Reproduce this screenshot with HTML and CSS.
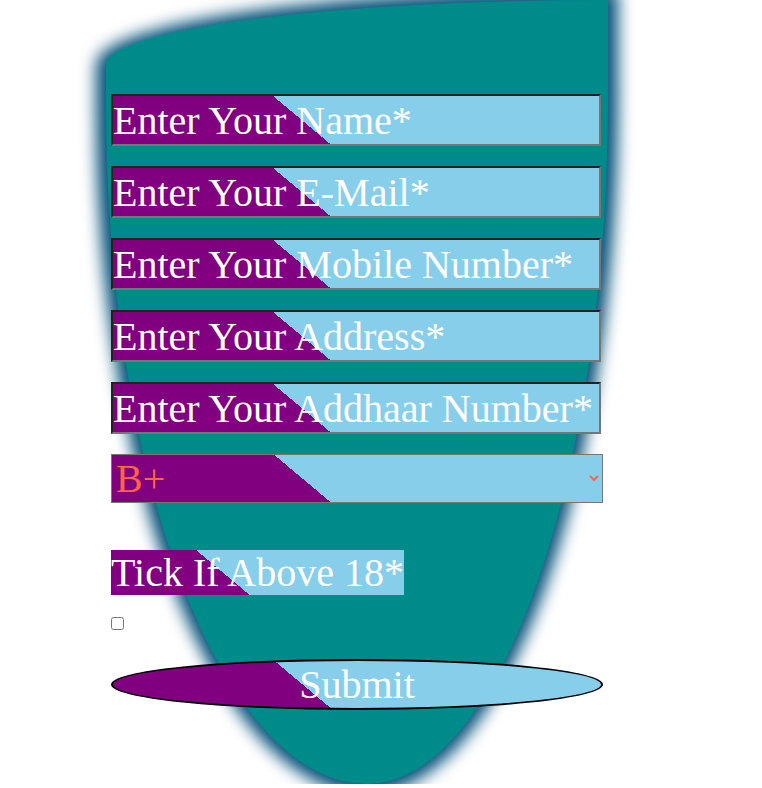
FILE: index.html
```html
<!DOCTYPE html>
<html lang="en">
<head>
<meta charset="utf-8">
<title>Registration Form</title>
<link rel="stylesheet" href="styles.css">
</head>
<body>
<form class="blob">
  <input class="field" type="text" placeholder="Enter Your Name*">
  <input class="field" type="email" placeholder="Enter Your E-Mail*">
  <input class="field" type="text" placeholder="Enter Your Mobile Number*">
  <input class="field" type="text" placeholder="Enter Your Address*">
  <input class="field" type="text" placeholder="Enter Your Addhaar Number*">
  <select class="group">
    <option>B+</option>
    <option>A+</option>
    <option>O+</option>
    <option>AB+</option>
  </select>
  <div class="tick-row"><label class="tick" for="adult">Tick If Above 18*</label></div>
  <input class="check" id="adult" type="checkbox">
  <button class="submit" type="submit">Submit</button>
</form>
</body>
</html>
```

FILE: styles.css
```css
html, body {
  margin: 0;
  padding: 0;
  background: #ffffff;
  overflow: hidden;
}

.blob {
  box-sizing: border-box;
  width: 502px;
  height: 784px;
  margin: 0 0 0 106px;
  padding: 94px 0 0 5px;
  background: #008b8b;
  border-radius: 502px 0 241px 261px / 65px 0 690px 680px;
  box-shadow: 0 0 16px 10px #06527a;
  display: flex;
  flex-direction: column;
  align-items: flex-start;
  font-family: "Liberation Serif", "Times New Roman", serif;
}

.field {
  box-sizing: border-box;
  width: 490px;
  height: 52px;
  margin: 0 0 20px 0;
  padding: 1px 0;
  border-width: 2px;
  border-style: solid;
  border-color: #222222 #767676 #767676 #222222;
  font-family: "Liberation Serif", "Times New Roman", serif;
  font-size: 40px;
  color: #ffffff;
  background: linear-gradient(40deg, #800080 40%, #87ceeb 40%);
  outline: none;
}

.field::placeholder {
  color: #ffffff;
  opacity: 1;
}

.group {
  box-sizing: border-box;
  width: 492px;
  height: 49px;
  margin: 0 0 47px 0;
  border: 1px solid #767676;
  font-family: "Liberation Serif", "Times New Roman", serif;
  font-size: 40px;
  color: #ff6347;
  background: linear-gradient(40deg, #800080 40%, #87ceeb 40%);
}

.tick-row {
  display: flex;
}

.tick {
  display: inline-block;
  line-height: 45px;
  height: 45px;
  font-size: 40px;
  color: #ffffff;
  background: linear-gradient(40deg, #800080 40%, #87ceeb 40%);
}

.check {
  width: 13px;
  height: 13px;
  margin: 22px 0 29px 0;
}

.submit {
  box-sizing: border-box;
  width: 492px;
  height: 51px;
  padding: 0;
  border: 2px solid #000000;
  border-radius: 50%;
  font-family: "Liberation Serif", "Times New Roman", serif;
  font-size: 40px;
  line-height: 46px;
  color: #ffffff;
  background: linear-gradient(40deg, #800080 40%, #87ceeb 40%);
}
```
